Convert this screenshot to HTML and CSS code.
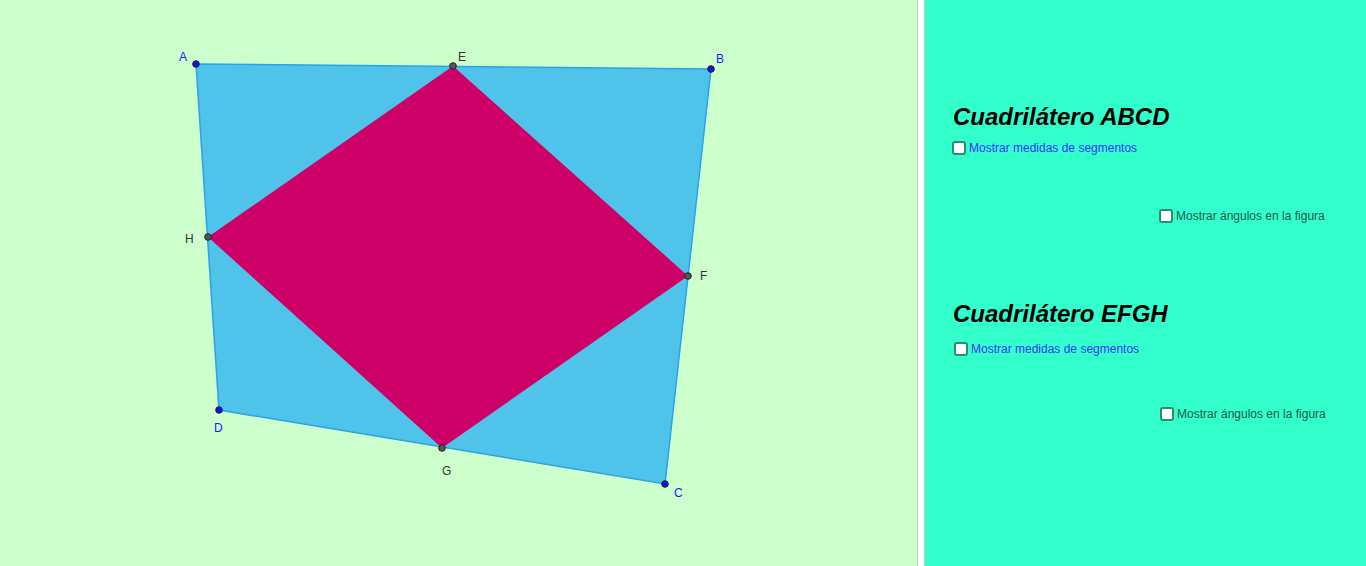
FILE: index.html
```html
<!DOCTYPE html>
<html>
<head>
<meta charset="utf-8">
<link rel="stylesheet" href="styles.css">
</head>
<body>
<div class="app">
  <div class="graphics">
    <svg class="canvas" width="917" height="566" viewBox="0 0 917 566">
      <polygon points="196,64 711,69 665,484 219,410" fill="#4fc3ea" stroke="#2aa3e6" stroke-width="1.5"/>
      <polygon points="453,66 688,276 442,448 208,237" fill="#cc0066"/>
      <g fill="#1111ee" stroke="#222" stroke-width="1">
        <circle cx="196" cy="64" r="3.3"/>
        <circle cx="711" cy="69" r="3.3"/>
        <circle cx="665" cy="484" r="3.3"/>
        <circle cx="219" cy="410" r="3.3"/>
      </g>
      <g fill="#555" stroke="#222" stroke-width="1">
        <circle cx="453" cy="66" r="3.3"/>
        <circle cx="688" cy="276" r="3.3"/>
        <circle cx="442" cy="448" r="3.3"/>
        <circle cx="208" cy="237" r="3.3"/>
      </g>
      <g class="lbl-blue">
        <text x="179" y="61">A</text>
        <text x="716" y="63">B</text>
        <text x="674" y="497">C</text>
        <text x="214" y="432">D</text>
      </g>
      <g class="lbl-gray">
        <text x="458" y="61">E</text>
        <text x="700" y="280">F</text>
        <text x="442" y="475">G</text>
        <text x="185" y="243">H</text>
      </g>
    </svg>
  </div>
  <div class="divider"></div>
  <div class="panel">
    <h2 class="title t1">Cuadrilátero ABCD</h2>
    <label class="cb blue c1"><span class="box"></span>Mostrar medidas de segmentos</label>
    <label class="cb dark c2"><span class="box"></span>Mostrar ángulos en la figura</label>
    <h2 class="title t2">Cuadrilátero EFGH</h2>
    <label class="cb blue c3"><span class="box"></span>Mostrar medidas de segmentos</label>
    <label class="cb dark c4"><span class="box"></span>Mostrar ángulos en la figura</label>
  </div>
</div>
</body>
</html>
```

FILE: styles.css
```css
html, body {
  margin: 0;
  padding: 0;
  width: 1366px;
  height: 566px;
  overflow: hidden;
  font-family: "Liberation Sans", Arial, sans-serif;
}
.app {
  display: flex;
  width: 1366px;
  height: 566px;
}
.graphics {
  width: 917px;
  height: 566px;
  background: #ccffcc;
  flex: none;
}
.canvas {
  display: block;
}
.lbl-blue text, .lbl-gray text {
  font-family: "Liberation Sans", Arial, sans-serif;
  font-size: 12px;
}
.lbl-blue text { fill: #1a1aff; }
.lbl-gray text { fill: #333; }
.divider {
  flex: none;
  width: 6px;
  background: #fff;
  border-left: 1px solid #c8c8c8;
  border-right: 1px solid #c8c8c8;
}
.panel {
  flex: 1;
  position: relative;
  background: #33ffcc;
}
.title {
  position: absolute;
  margin: 0;
  font-size: 24px;
  font-weight: bold;
  font-style: italic;
  color: #000;
  line-height: 28px;
  left: 28px;
}
.t1 { top: 103px; }
.t2 { top: 300px; }
.cb {
  position: absolute;
  display: flex;
  align-items: center;
  font-size: 12px;
  line-height: 14px;
  white-space: nowrap;
}
.cb .box {
  width: 10px;
  height: 10px;
  background: #fff;
  border: 2px solid #2a8f72;
  border-radius: 3px;
  margin-right: 3px;
  box-sizing: content-box;
}
.blue { color: #3333ff; }
.dark { color: #1f5a4a; }
.c1 { left: 27px; top: 141px; }
.c2 { left: 234px; top: 209px; }
.c3 { left: 29px; top: 342px; }
.c4 { left: 235px; top: 407px; }
```
